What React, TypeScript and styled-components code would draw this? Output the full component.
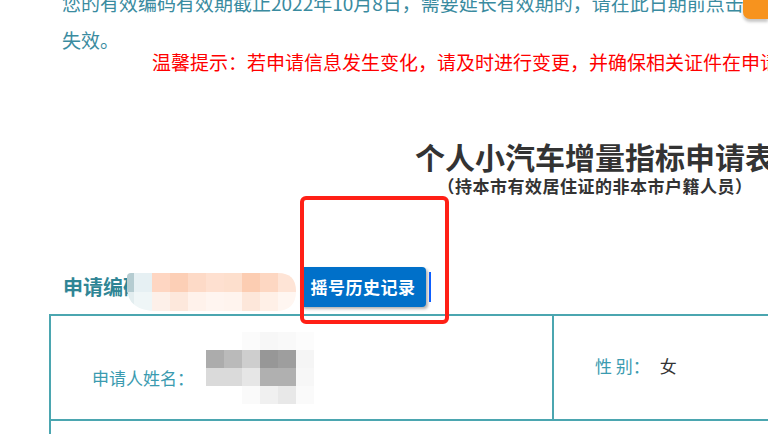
import React from "react";
import styled, { createGlobalStyle } from "styled-components";

const Global = createGlobalStyle`
  html, body { margin: 0; padding: 0; background: #ffffff; overflow: hidden; }
  body { font-family: "Noto Sans CJK SC", "Noto Sans", sans-serif; }
`;

const Page = styled.div`
  position: relative;
  display: flow-root;
  width: 1092px;
  margin-left: 49px;
`;

const TopNote = styled.p`
  margin: -16px 0 0;
  padding-left: 13px;
  font-size: 19px;
  line-height: 37px;
  color: #3a8ba0;
  white-space: nowrap;
`;

const Warning = styled.p`
  margin: -8px 0 0;
  padding-left: 103px;
  font-size: 19px;
  line-height: 24px;
  color: #ff0000;
  white-space: nowrap;
`;

const Title = styled.h1`
  margin: 64px 0 0;
  text-align: center;
  font-size: 30px;
  line-height: 36px;
  font-weight: 700;
  color: #333333;
  white-space: nowrap;
`;

const SubTitle = styled.h2`
  margin: 2px 0 0;
  text-align: center;
  font-size: 17px;
  line-height: 20px;
  font-weight: 700;
  letter-spacing: 0.5px;
  color: #333333;
  white-space: nowrap;
`;

const CodeRow = styled.div`
  display: flex;
  align-items: center;
  height: 48px;
  margin-top: 67px;
  padding-left: 14px;
`;

const CodeLabel = styled.span`
  font-size: 20px;
  line-height: 24px;
  font-weight: 700;
  color: #2f8595;
  white-space: nowrap;
`;

const CodeMosaic = styled.svg`
  display: block;
  flex: none;
  margin-left: -16px;
  margin-top: 10px;
`;

const HistoryButton = styled.button`
  flex: none;
  width: 126px;
  height: 40px;
  margin-left: 4px;
  padding: 0;
  border: none;
  border-radius: 4px;
  background: #0070c9;
  color: #ffffff;
  font-family: inherit;
  font-size: 17px;
  line-height: 40px;
  font-weight: 700;
  letter-spacing: 0.5px;
  box-shadow: 2px 2px 3px rgba(0, 0, 0, 0.3);
  cursor: pointer;
`;

const Caret = styled.span`
  flex: none;
  width: 2px;
  height: 30px;
  margin-left: 3px;
  background: #0d5fff;
`;

const Table = styled.div`
  margin-top: 3px;
  border-top: 2px solid #4ba6b0;
  border-left: 2px solid #4ba6b0;
`;

const Row = styled.div<{ $cols: string; $height: number }>`
  display: grid;
  grid-template-columns: ${(p) => p.$cols};
  height: ${(p) => p.$height}px;
`;

const Cell = styled.div<{ $pb?: number }>`
  display: flex;
  align-items: center;
  padding-left: 41px;
  padding-bottom: ${(p) => p.$pb ?? 0}px;
  border-right: 2px solid #4ba6b0;
  border-bottom: 2px solid #4ba6b0;
  white-space: nowrap;
`;

const FieldLabel = styled.span<{ $pt?: number }>`
  font-size: 17px;
  line-height: 24px;
  padding-top: ${(p) => p.$pt ?? 0}px;
  color: #3b9bb0;
`;

const FieldValue = styled.span`
  margin-left: 10px;
  font-size: 17px;
  line-height: 24px;
  color: #333333;
`;

const NameMosaic = styled.svg`
  display: block;
  flex: none;
  margin-left: 12px;
`;

const Highlight = styled.div`
  position: absolute;
  left: 251px;
  top: 196px;
  width: 149px;
  height: 128px;
  box-sizing: border-box;
  border: 4px solid #ff2016;
  border-radius: 6px;
  pointer-events: none;
`;

const FloatTab = styled.div`
  position: fixed;
  top: 0;
  right: 0;
  width: 25px;
  height: 19px;
  background: #f7931e;
  border-bottom-left-radius: 7px;
  box-shadow: 0 3px 3px rgba(0, 0, 0, 0.22);
`;

const codeCols: [number, string, string][] = [
  [7, "#b5ccd1", "#e2edef"],
  [18, "#e6f0f3", "#eff6f7"],
  [18, "#fed6c2", "#fdf0e9"],
  [18, "#fccfb6", "#fde8dc"],
  [18, "#fddac7", "#fff2eb"],
  [18, "#fee0d0", "#fff5f0"],
  [18, "#fddfcd", "#fff4ee"],
  [18, "#fccdb2", "#fde7da"],
  [18, "#fdd7c2", "#fff0e7"],
  [18, "#fee4d6", "#fff6f1"],
];

const nameGrid: string[][] = [
  ["#ffffff", "#ffffff", "#fbfbfb", "#f7f7f7", "#f9f9f9", "#fcfcfc"],
  ["#acacac", "#bababa", "#cecece", "#979797", "#9e9e9e", "#f5f5f5"],
  ["#dadada", "#dadada", "#e6e6e6", "#b0b0b0", "#b0b0b0", "#f7f7f7"],
  ["#ffffff", "#ffffff", "#fafafa", "#f0f0f0", "#e8e8e8", "#fafafa"],
];

function CodeBlur() {
  let x = 0;
  const rects: React.ReactNode[] = [];
  codeCols.forEach(([w, top, bottom], i) => {
    rects.push(<rect key={`t${i}`} x={x} y={0} width={w} height={19} fill={top} />);
    rects.push(<rect key={`b${i}`} x={x} y={19} width={w} height={19} fill={bottom} />);
    x += w;
  });
  return (
    <CodeMosaic width={169} height={38} viewBox="0 0 169 38">
      <defs>
        <clipPath id="codeClip">
          <path d="M4 0 H151 Q169 0 169 18 Q169 38 149 38 H30 Q0 38 0 14 V4 Q0 0 4 0 Z" />
        </clipPath>
      </defs>
      <g clipPath="url(#codeClip)">{rects}</g>
    </CodeMosaic>
  );
}

function NameBlur() {
  return (
    <NameMosaic width={108} height={72} viewBox="0 0 108 72">
      {nameGrid.map((row, r) =>
        row.map((c, i) => (
          <rect key={`${r}-${i}`} x={i * 18} y={r * 18} width={18} height={18} fill={c} />
        ))
      )}
    </NameMosaic>
  );
}

export default function App() {
  return (
    <>
      <Global />
      <Page>
        <TopNote>
          您的有效编码有效期截止2022年10月8日，需要延长有效期的，请在此日期前点击延长按钮，逾期未延长的，有效编码将自动
          <br />
          失效。
        </TopNote>
        <Warning>温馨提示：若申请信息发生变化，请及时进行变更，并确保相关证件在申请有效期内。</Warning>
        <Title>个人小汽车增量指标申请表</Title>
        <SubTitle>（持本市有效居住证的非本市户籍人员）</SubTitle>
        <CodeRow>
          <CodeLabel>申请编码</CodeLabel>
          <CodeBlur />
          <HistoryButton type="button">摇号历史记录</HistoryButton>
          <Caret />
        </CodeRow>
        <Table>
          <Row $cols="503px 1fr" $height={105}>
            <Cell>
              <FieldLabel $pt={20}>申请人姓名：</FieldLabel>
              <NameBlur />
            </Cell>
            <Cell $pb={4}>
              <FieldLabel>性 别：</FieldLabel>
              <FieldValue>女</FieldValue>
            </Cell>
          </Row>
          <Row $cols="1fr" $height={105}>
            <Cell />
          </Row>
        </Table>
        <Highlight />
      </Page>
      <FloatTab />
    </>
  );
}
